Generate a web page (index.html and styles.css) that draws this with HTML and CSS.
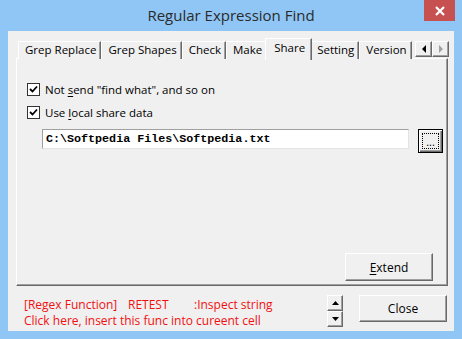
FILE: index.html
```html
<!DOCTYPE html>
<html>
<head>
<meta charset="utf-8">
<link rel="stylesheet" href="styles.css">
</head>
<body>
<div class="window">
  <div class="titlebar">
    <div class="title">Regular Expression Find</div>
    <div class="close-x">
      <svg width="12" height="10" viewBox="0 0 12 10"><path d="M2 1 L10 9 M10 1 L2 9" stroke="#fff" stroke-width="2.2" fill="none"/></svg>
    </div>
  </div>
  <div class="client">
    <div class="tabrow">
      <div class="tab">Grep Replace</div>
      <div class="tab">Grep Shapes</div>
      <div class="tab">Check</div>
      <div class="tab">Make</div>
      <div class="tab active">Share</div>
      <div class="tab">Setting</div>
      <div class="tab">Version</div>
      <div class="tab-scroll">
        <div class="sbtn"><svg width="6" height="8" viewBox="0 0 6 8"><path d="M5 0 L1 4 L5 8 Z" fill="#000"/></svg></div>
        <div class="sbtn"><svg width="6" height="8" viewBox="0 0 6 8"><path d="M1 0 L5 4 L1 8 Z" fill="#a0a0a0"/></svg></div>
      </div>
    </div>
    <div class="panel">
      <label class="check">
        <span class="box"><svg width="11" height="11" viewBox="0 0 11 11"><path d="M2 5 L4.5 7.5 L9 2.5" stroke="#000" stroke-width="1.8" fill="none"/></svg></span>
        <span>Not <u>s</u>end "find what", and so on</span>
      </label>
      <label class="check">
        <span class="box"><svg width="11" height="11" viewBox="0 0 11 11"><path d="M2 5 L4.5 7.5 L9 2.5" stroke="#000" stroke-width="1.8" fill="none"/></svg></span>
        <span>Use <u>l</u>ocal share data</span>
      </label>
      <div class="path-row">
        <div class="textbox">C:\Softpedia Files\Softpedia.txt</div>
        <div class="browse"><span class="focus">...</span></div>
      </div>
      <div class="panel-foot">
        <div class="btn extend"><u>E</u>xtend</div>
      </div>
    </div>
    <div class="footer">
      <div class="info">
        <div class="line"><span class="c1">[Regex Function]</span><span class="c2">RETEST</span><span>:Inspect string</span></div>
        <div class="line">Click here, insert this func into cureent cell</div>
      </div>
      <div class="spin">
        <div class="spbtn"><svg width="7" height="4" viewBox="0 0 7 4"><path d="M0 4 L3.5 0 L7 4 Z" fill="#000"/></svg></div>
        <div class="spbtn"><svg width="7" height="4" viewBox="0 0 7 4"><path d="M0 0 L3.5 4 L7 0 Z" fill="#000"/></svg></div>
      </div>
      <div class="btn close">Close</div>
    </div>
  </div>
</div>
</body>
</html>
```

FILE: styles.css
```css
* { box-sizing: border-box; }
html, body { margin: 0; padding: 0; }
body {
  width: 462px;
  height: 339px;
  background: #8fc6f5;
  font-family: "Open Sans", "Noto Sans", sans-serif;
  overflow: hidden;
}
.window { width: 462px; height: 339px; display: flex; flex-direction: column; }
.titlebar {
  height: 31px;
  display: flex;
  align-items: flex-start;
  padding-left: 38px;
}
.title {
  flex: 1;
  text-align: center;
  font-size: 15px;
  line-height: 30px;
  color: #2b2b2b;
}
.close-x {
  width: 31px;
  height: 21px;
  margin-right: 7px;
  background: #c75050;
  display: flex;
  align-items: center;
  justify-content: center;
}
.client {
  margin: 0 8px;
  height: 300px;
  background: #f0f0f0;
  padding: 7px 6px 0 8px;
  display: flex;
  flex-direction: column;
  font-size: 11.5px;
  color: #000;
}
.tabrow {
  height: 20px;
  display: flex;
  align-items: flex-end;
  padding-left: 2px;
  position: relative;
  z-index: 2;
}
.tab {
  height: 18px;
  padding: 0 4px 0 6px;
  margin-bottom: -1px;
  border-top: 1px solid #fff;
  border-left: 1px solid #fff;
  border-right: 1px solid #696969;
  box-shadow: inset -1px 0 #a0a0a0;
  line-height: 16px;
  white-space: nowrap;
  background: #f0f0f0;
}
.tab.active {
  height: 22px;
  margin: 0 -2px -2px -2px;
  padding: 0 6px 0 8px;
  line-height: 17px;
  position: relative;
  z-index: 3;
}
.tab-scroll {
  display: flex;
  margin-left: auto;
  margin-bottom: 1px;
  margin-right: -1px;
}
.sbtn {
  width: 17px;
  height: 16px;
  border: 1px solid;
  border-color: #fff #696969 #696969 #fff;
  box-shadow: inset -1px -1px #a0a0a0;
  display: flex;
  align-items: center;
  justify-content: center;
  background: #f0f0f0;
}
.panel {
  height: 228px;
  border: 1px solid;
  border-color: #fff #696969 #696969 #fff;
  box-shadow: inset -1px -1px #a0a0a0;
  display: flex;
  flex-direction: column;
  padding: 23px 4px 4px 10px;
}
.check {
  display: flex;
  align-items: center;
  height: 15px;
  margin-bottom: 8px;
  white-space: nowrap;
}
.box {
  width: 13px;
  height: 13px;
  border: 1px solid #333;
  background: #fff;
  margin-right: 5px;
  display: flex;
  align-items: center;
  justify-content: center;
}
.check u { text-decoration: underline; text-underline-offset: 2px; }
.path-row {
  display: flex;
  align-items: flex-start;
  margin-top: 1px;
  padding-left: 15px;
}
.textbox {
  flex: 0 0 367px;
  height: 20px;
  background: #fff;
  border: 1px solid;
  border-color: #a0a0a0 #e3e3e3 #e3e3e3 #a0a0a0;
  font-family: "Liberation Mono", "Courier New", monospace;
  font-weight: bold;
  font-size: 11.7px;
  line-height: 18px;
  padding-left: 3px;
  color: #000;
}
.browse {
  flex: 0 0 25px;
  height: 24px;
  margin-left: 9px;
  border: 1px solid #000;
  box-shadow: inset 1px 1px #fff, inset -1px -1px #696969, inset -2px -2px #a0a0a0;
  padding: 3px;
  display: flex;
}
.focus {
  flex: 1;
  border: 1px dotted #000;
  display: flex;
  align-items: flex-end;
  justify-content: center;
  font-size: 11px;
  line-height: 10px;
  padding-bottom: 1px;
}
.panel-foot {
  margin-top: auto;
  display: flex;
  justify-content: flex-end;
  padding-right: 10px;
}
.btn {
  border: 1px solid;
  border-color: #fff #696969 #696969 #fff;
  box-shadow: inset -1px -1px #a0a0a0;
  display: flex;
  align-items: center;
  justify-content: center;
  font-size: 12px;
  background: #f0f0f0;
}
.extend { width: 88px; height: 28px; }
.extend u { text-underline-offset: 2px; }
.footer {
  display: flex;
  align-items: flex-start;
  padding-top: 9px;
}
.info {
  flex: 1;
  color: #f01010;
  font-size: 12px;
  line-height: 16px;
  padding-left: 8px;
  padding-top: 2px;
  white-space: nowrap;
}
.info .c1 { display: inline-block; width: 104px; }
.info .c2 { display: inline-block; width: 66px; }
.spin {
  display: flex;
  flex-direction: column;
  margin-right: 16px;
}
.spbtn {
  width: 16px;
  height: 16px;
  border: 1px solid;
  border-color: #fff #696969 #696969 #fff;
  box-shadow: inset -1px -1px #a0a0a0;
  display: flex;
  align-items: center;
  justify-content: center;
}
.close { width: 88px; height: 27px; margin-right: 1px; }
```
